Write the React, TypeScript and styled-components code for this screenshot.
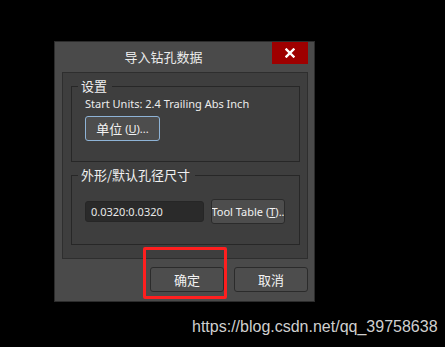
import React from 'react';
import styled, { createGlobalStyle } from 'styled-components';

// ─── Global ───────────────────────────────────────────────────────────────────
const GlobalStyle = createGlobalStyle`
  html, body {
    margin: 0;
    padding: 0;
    background: #000;
  }
  * { box-sizing: border-box; }
`;

const Screen = styled.div`
  position: relative;
  width: 445px;
  height: 347px;
  background: #000;
  overflow: hidden;
  padding: 41px 0 0 54px;
  font-family: "Noto Sans", "Noto Sans CJK SC", sans-serif;
  color: #ececec;
`;

// ─── Dialog ───────────────────────────────────────────────────────────────────
const Dialog = styled.div`
  width: 261px;
  height: 261px;
  background: #4a4a4a;
  border: 1px solid #2c2c2c;
  display: flex;
  flex-direction: column;
`;

const TitleBar = styled.div`
  display: flex;
  align-items: flex-start;
  height: 30px;
  padding-right: 6px;
`;

const Title = styled.div`
  flex: 1;
  text-align: center;
  font-family: "Noto Sans CJK SC", sans-serif;
  font-size: 13px;
  line-height: 30px;
`;

const CloseButton = styled.div`
  width: 36px;
  height: 22px;
  background: #9e0000;
  display: flex;
  align-items: center;
  justify-content: center;
`;

const Body = styled.div`
  margin: 0 6px 0 7px;
  background: #3e3e3e;
  border: 1px solid #2e2e2e;
  padding: 5px 7px 13px 8px;
  display: flex;
  flex-direction: column;
  gap: 5px;
  height: 187px;
`;

// ─── Group box ────────────────────────────────────────────────────────────────
const Group = styled.fieldset<{ $height: number }>`
  margin: 0;
  height: ${p => p.$height}px;
  border: 1px solid #272727;
  padding: 0 13px 0 13px;
  min-width: 0;
`;

const Legend = styled.legend`
  font-family: "Noto Sans CJK SC", sans-serif;
  font-size: 13px;
  line-height: 16px;
  padding: 0 5px 0 3px;
  margin-left: -7px;
  color: #f0f0f0;
`;

const InfoText = styled.div`
  font-size: 11px;
  line-height: 14px;
  margin-top: 3px;
  white-space: nowrap;
`;

const Row = styled.div<{ $top: number }>`
  display: flex;
  align-items: center;
  gap: 7px;
  margin-top: ${p => p.$top}px;
`;

const Button = styled.div<{ $width: number; $focused?: boolean }>`
  width: ${p => p.$width}px;
  height: 25px;
  flex: none;
  background: #4d4d4d;
  border: 1px solid ${p => (p.$focused ? '#8eb3d6' : '#2b2b2b')};
  border-radius: 3px;
  display: flex;
  align-items: center;
  justify-content: center;
  overflow: hidden;
  white-space: nowrap;
  font-size: 11px;
  color: #f2f2f2;
`;

const CjkLabel = styled.span`
  font-family: "Noto Sans CJK SC", sans-serif;
  font-size: 13px;
`;

const Mnemonic = styled.span`
  text-decoration: underline;
`;

const Field = styled.div`
  width: 119px;
  height: 21px;
  background: #2a2a2a;
  border: 1px solid #262626;
  border-radius: 3px;
  padding-left: 5px;
  display: flex;
  align-items: center;
  font-size: 11px;
  color: #e8e8e8;
`;

const Footer = styled.div`
  display: flex;
  justify-content: flex-end;
  gap: 10px;
  padding: 8px 6px 0 0;
`;

// ─── Overlays ─────────────────────────────────────────────────────────────────
const Highlight = styled.div`
  position: absolute;
  left: 143px;
  top: 247px;
  width: 84px;
  height: 52px;
  border: 3px solid #ff1f1f;
  border-radius: 2px;
`;

const Watermark = styled.div`
  position: absolute;
  left: 192px;
  top: 318px;
  font-family: "Liberation Sans", Arial, sans-serif;
  font-size: 16px;
  line-height: 18px;
  color: #cfcfcf;
`;

// ─── Component ────────────────────────────────────────────────────────────────
export default function App() {
  return (
    <Screen>
      <GlobalStyle />
      <Dialog>
        <TitleBar>
          <Title>导入钻孔数据</Title>
          <CloseButton>
            <svg width="10" height="10" viewBox="0 0 10 10">
              <path d="M1.5 1.5L8.5 8.5M8.5 1.5L1.5 8.5" stroke="#fff" strokeWidth="2.4" strokeLinecap="square" />
            </svg>
          </CloseButton>
        </TitleBar>

        <Body>
          <Group $height={84}>
            <Legend>设置</Legend>
            <InfoText>Start Units: 2.4 Trailing Abs Inch</InfoText>
            <Row $top={5}>
              <Button $width={75} $focused>
                <CjkLabel>单位</CjkLabel>&nbsp;(<Mnemonic>U</Mnemonic>)...
              </Button>
            </Row>
          </Group>

          <Group $height={78}>
            <Legend>外形/默认孔径尺寸</Legend>
            <Row $top={16}>
              <Field>0.0320:0.0320</Field>
              <Button $width={74}>
                Tool Table (<Mnemonic>T</Mnemonic>)..
              </Button>
            </Row>
          </Group>
        </Body>

        <Footer>
          <Button $width={74}><CjkLabel>确定</CjkLabel></Button>
          <Button $width={74}><CjkLabel>取消</CjkLabel></Button>
        </Footer>
      </Dialog>

      <Highlight />
      <Watermark>https://blog.csdn.net/qq_39758638</Watermark>
    </Screen>
  );
}
